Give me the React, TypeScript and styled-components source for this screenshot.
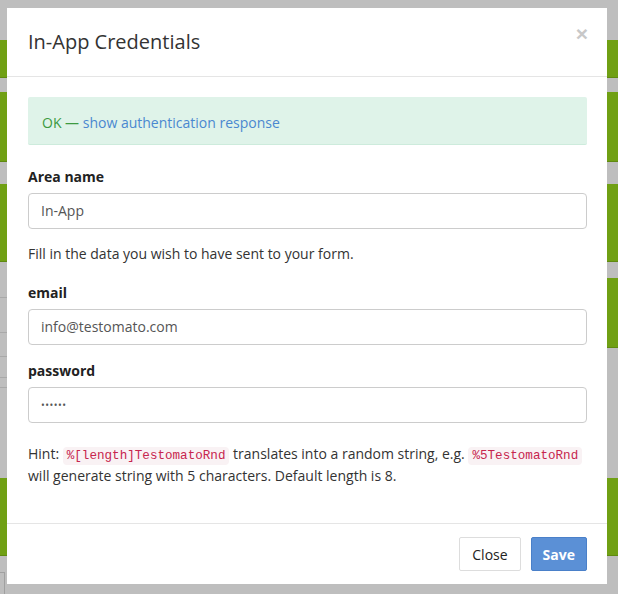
import React from "react";
import styled, { createGlobalStyle } from "styled-components";

const Global = createGlobalStyle`
  html, body { margin: 0; padding: 0; }
  body {
    background: #bebebe;
    font-family: "Open Sans", "Liberation Sans", sans-serif;
    font-size: 14px;
    line-height: 20px;
    color: #333;
  }
  * { box-sizing: border-box; }
`;

const Screen = styled.div`
  position: relative;
  width: 618px;
  height: 594px;
  overflow: hidden;
  background: #bebebe;
`;

const Backdrop = styled.div`
  display: flex;
  flex-direction: column;
  padding-top: 40px;
`;

const GreenRow = styled.div<{ $h: number; $mt: number }>`
  height: ${(p) => p.$h}px;
  margin-top: ${(p) => p.$mt}px;
  background: #70a014;
  border-bottom: 1px solid #5f8a10;
`;

const SplitRow = styled.div`
  display: grid;
  grid-template-columns: 300px 1fr;
  margin-top: 16px;
  height: 110px;
`;

const GreenBlock = styled.div`
  height: 70px;
  background: #70a014;
  border-bottom: 1px solid #5f8a10;
`;

const LeftRule = styled.div`
  grid-column: 1;
  align-self: end;
  border-bottom: 1px solid #a9a9a9;
`;

const TableCol = styled.div`
  grid-row: 1 / span 2;
  display: flex;
  flex-direction: column;
`;

const TableCell = styled.div<{ $h: number }>`
  height: ${(p) => p.$h}px;
  border-bottom: 1px solid #a9a9a9;
  display: flex;
  align-items: center;
  justify-content: flex-end;
  padding-right: 2px;
  font-size: 20px;
  font-weight: 700;
  color: #111;
`;

const OutlineBox = styled.div`
  margin-top: 16px;
  width: 5px;
  height: 30px;
  border: 1px solid #a0a0a0;
  border-left: none;
`;

const Modal = styled.div`
  position: absolute;
  left: 7px;
  top: 8px;
  width: 600px;
  height: 576px;
  background: #fff;
  display: flex;
  flex-direction: column;
`;

const Header = styled.div`
  display: flex;
  align-items: flex-start;
  justify-content: space-between;
  padding: 20px 20px 20px 21px;
  border-bottom: 1px solid #e5e5e5;
`;

const Title = styled.h4`
  margin: 0;
  font-size: 20px;
  font-weight: 400;
  line-height: 28px;
  color: #333;
`;

const CloseX = styled.span`
  font-family: "Liberation Sans", sans-serif;
  font-size: 21px;
  font-weight: 700;
  line-height: 1;
  color: #c8c8c8;
  margin-top: -5px;
  margin-right: -1px;
`;

const Body = styled.div`
  flex: 1;
  padding: 20px 20px 0 21px;
`;

const Alert = styled.div`
  background: #dff3e9;
  border-bottom: 1px solid #cdebdc;
  border-radius: 2px;
  padding: 16px 14px 11px;
  margin-bottom: 22px;
  color: #3d9a41;
  line-height: 20px;
`;

const Link = styled.a`
  color: #4a88d0;
  text-decoration: none;
`;

const Group = styled.div<{ $mb: number }>`
  margin-bottom: ${(p) => p.$mb}px;
`;

const Label = styled.label`
  display: block;
  font-weight: 700;
  color: #222;
  margin-bottom: 6px;
`;

const Input = styled.div<{ $dots?: boolean }>`
  height: 36px;
  border: 1px solid #ccc;
  border-radius: 4px;
  padding: 7px 12px;
  color: #555;
  font-size: ${(p) => (p.$dots ? "10px" : "14px")};
  letter-spacing: ${(p) => (p.$dots ? "0.5px" : "0")};
  line-height: 20px;
`;

const Help = styled.p`
  margin: 0 0 19px;
  color: #333;
`;

const Hint = styled.p`
  margin: 0;
  line-height: 22px;
  color: #333;
`;

const Code = styled.code`
  font-family: "Liberation Mono", monospace;
  font-size: 12.6px;
  line-height: 1;
  color: #c7254e;
  background: #f9f2f4;
  border-radius: 4px;
  padding: 2px 4px;
`;

const Footer = styled.div`
  display: flex;
  justify-content: flex-end;
  gap: 10px;
  padding: 13px 20px 13px;
  border-top: 1px solid #e5e5e5;
`;

const Button = styled.button<{ $primary?: boolean }>`
  height: 34px;
  padding: 0 ${(p) => (p.$primary ? "11px" : "12px")};
  font-family: "Open Sans", "Liberation Sans", sans-serif;
  font-size: 14px;
  font-weight: ${(p) => (p.$primary ? 700 : 400)};
  border-radius: 2px;
  border: 1px solid ${(p) => (p.$primary ? "#4a80c9" : "#ddd")};
  background: ${(p) => (p.$primary ? "#5b90d6" : "#fff")};
  color: ${(p) => (p.$primary ? "#fff" : "#222")};
`;

export default function App() {
  return (
    <>
      <Global />
      <Screen>
        <Backdrop>
          <GreenRow $h={38} $mt={0} />
          <GreenRow $h={70} $mt={14} />
          <GreenRow $h={78} $mt={22} />
          <SplitRow>
            <GreenBlock />
            <TableCol>
              <TableCell $h={20} />
              <TableCell $h={35}>+</TableCell>
              <TableCell $h={24} />
              <TableCell $h={21} />
            </TableCol>
            <LeftRule />
          </SplitRow>
          <GreenRow $h={78} $mt={90} />
          <OutlineBox />
        </Backdrop>
        <Modal>
          <Header>
            <Title>In-App Credentials</Title>
            <CloseX>×</CloseX>
          </Header>
          <Body>
            <Alert>
              OK — <Link>show authentication response</Link>
            </Alert>
            <Group $mb={15}>
              <Label>Area name</Label>
              <Input>In-App</Input>
            </Group>
            <Help>Fill in the data you wish to have sent to your form.</Help>
            <Group $mb={16}>
              <Label>email</Label>
              <Input>info@testomato.com</Input>
            </Group>
            <Group $mb={20}>
              <Label>password</Label>
              <Input $dots>••••••</Input>
            </Group>
            <Hint>
              Hint: <Code>%[length]TestomatoRnd</Code> translates into a random string, e.g.{" "}
              <Code>%5TestomatoRnd</Code> will generate string with 5 characters. Default length is 8.
            </Hint>
          </Body>
          <Footer>
            <Button>Close</Button>
            <Button $primary>Save</Button>
          </Footer>
        </Modal>
      </Screen>
    </>
  );
}
